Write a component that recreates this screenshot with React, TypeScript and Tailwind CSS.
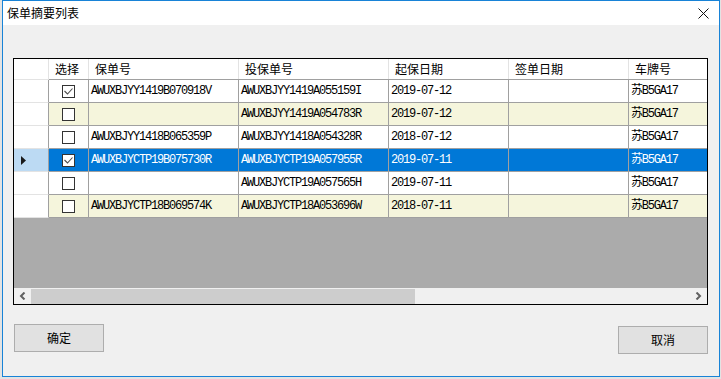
import React from "react";

const cjk = "font-['Noto_Sans_CJK_SC',sans-serif]";
const mono = "font-['Liberation_Mono','Noto_Sans_CJK_SC',monospace] text-[12px] tracking-[-1.2px]";

type Row = {
  checked: boolean;
  policy: string;
  apply: string;
  start: string;
  sign: string;
  plate: string;
  bg: string;
  selected?: boolean;
};

const rows: Row[] = [
  { checked: true, policy: "AWUXBJYY1419B070918V", apply: "AWUXBJYY1419A055159I", start: "2019-07-12", sign: "", plate: "苏B5GA17", bg: "bg-white" },
  { checked: false, policy: "", apply: "AWUXBJYY1419A054783R", start: "2019-07-12", sign: "", plate: "苏B5GA17", bg: "bg-[#f5f5dc]" },
  { checked: false, policy: "AWUXBJYY1418B065359P", apply: "AWUXBJYY1418A054328R", start: "2018-07-12", sign: "", plate: "苏B5GA17", bg: "bg-white" },
  { checked: true, policy: "AWUXBJYCTP19B075730R", apply: "AWUXBJYCTP19A057955R", start: "2019-07-11", sign: "", plate: "苏B5GA17", bg: "bg-[#0078d7]", selected: true },
  { checked: false, policy: "", apply: "AWUXBJYCTP19A057565H", start: "2019-07-11", sign: "", plate: "苏B5GA17", bg: "bg-white" },
  { checked: false, policy: "AWUXBJYCTP18B069574K", apply: "AWUXBJYCTP18A053696W", start: "2018-07-11", sign: "", plate: "苏B5GA17", bg: "bg-[#f5f5dc]" },
];

function CheckBox({ checked }: { checked: boolean }) {
  return (
    <div className="w-[13px] h-[13px] border border-[#333333] bg-white flex items-center justify-center">
      {checked && (
        <svg width="11" height="11" viewBox="0 0 11 11">
          <path d="M1.5 5 L4.5 8 L9.5 2.5" fill="none" stroke="#4d4d4d" strokeWidth="1.1" />
        </svg>
      )}
    </div>
  );
}

function Header() {
  const cell = "h-full flex items-center pl-[6px] border-r border-[#e3e3e3] shrink-0 text-[12px] text-black " + cjk;
  return (
    <div className="flex h-[21px] bg-white">
      <div className="w-[35px] h-full border-r border-[#e3e3e3] border-b border-b-[#e3e3e3] shrink-0" />
      <div className="flex h-full border-b border-[#a0a0a0]">
        <div className={cell + " w-[40px]"}>选择</div>
        <div className={cell + " w-[150px]"}>保单号</div>
        <div className={cell + " w-[150px]"}>投保单号</div>
        <div className={cell + " w-[120px]"}>起保日期</div>
        <div className={cell + " w-[120px]"}>签单日期</div>
        <div className={cell + " w-[100px] border-r-0"}>车牌号</div>
      </div>
    </div>
  );
}

function DataRow({ row }: { row: Row }) {
  const text = row.selected ? "text-white" : "text-black";
  const cell = "h-full flex items-center pl-[2px] border-r border-[#a0a0a0] shrink-0 whitespace-nowrap overflow-hidden " + mono + " " + text;
  return (
    <div className="flex h-[23px]">
      <div
        className={
          "w-[35px] h-full shrink-0 border-r border-[#a0a0a0] border-b border-b-[#e3e3e3] flex items-center pl-[7px] " +
          (row.selected ? "bg-[#bcdaf3]" : "bg-white")
        }
      >
        {row.selected && (
          <svg width="5" height="9" viewBox="0 0 5 9">
            <path d="M0 0 L5 4.5 L0 9 Z" fill="#1a1a1a" />
          </svg>
        )}
      </div>
      <div className={"flex h-full border-b border-[#a0a0a0] " + row.bg}>
        <div className="w-[40px] h-full shrink-0 border-r border-[#a0a0a0] flex items-center justify-center">
          <CheckBox checked={row.checked} />
        </div>
        <div className={cell + " w-[150px]"}>{row.policy}</div>
        <div className={cell + " w-[150px]"}>{row.apply}</div>
        <div className={cell + " w-[120px]"}>{row.start}</div>
        <div className={cell + " w-[120px]"}>{row.sign}</div>
        <div className={cell + " w-[100px] border-r-0"}>{row.plate}</div>
      </div>
    </div>
  );
}

function ScrollBar() {
  return (
    <div className="flex h-[16px] bg-[#f0f0f0]">
      <div className="w-[17px] h-full flex items-center justify-center shrink-0">
        <svg width="7" height="8" viewBox="0 0 7 8">
          <path d="M5.5 0.5 L2 4 L5.5 7.5" fill="none" stroke="#606060" strokeWidth="2" />
        </svg>
      </div>
      <div className="flex-1 h-full pt-[1px] flex">
        <div className="w-[384px] h-full bg-[#cdcdcd]" />
      </div>
      <div className="w-[17px] h-full flex items-center justify-center shrink-0">
        <svg width="7" height="8" viewBox="0 0 7 8">
          <path d="M1.5 0.5 L5 4 L1.5 7.5" fill="none" stroke="#606060" strokeWidth="2" />
        </svg>
      </div>
    </div>
  );
}

export default function App() {
  return (
    <div className="w-[721px] h-[379px] bg-[#e3e3e3] overflow-hidden">
      <div className="ml-[2px] w-[718px] h-[377px] border border-[#1883d7] bg-[#f0f0f0] flex flex-col">
        <div className="h-[24px] bg-white flex items-center justify-between pl-[4px] pr-[10px] shrink-0">
          <span className={"text-[12px] text-black " + cjk}>保单摘要列表</span>
          <svg width="11" height="11" viewBox="0 0 11 11">
            <path d="M0.5 0.5 L10.5 10.5 M10.5 0.5 L0.5 10.5" stroke="#111" strokeWidth="1" />
          </svg>
        </div>
        <div className="flex-1 px-[10px] pt-[33px]">
          <div className="w-[695px] h-[247px] border border-[#000] flex flex-col overflow-hidden bg-[#ababab]">
            <Header />
            {rows.map((r, i) => (
              <DataRow key={i} row={r} />
            ))}
            <div className="flex-1" />
            <ScrollBar />
          </div>
          <div className="flex justify-between items-start mt-[19px]">
            <button className={"ml-[1px] w-[90px] h-[28px] border border-[#adadad] bg-[#e1e1e1] text-[12px] text-black " + cjk}>
              确定
            </button>
            <button className={"mr-[1px] mt-[2px] w-[90px] h-[28px] border border-[#adadad] bg-[#e1e1e1] text-[12px] text-black " + cjk}>
              取消
            </button>
          </div>
        </div>
      </div>
    </div>
  );
}
